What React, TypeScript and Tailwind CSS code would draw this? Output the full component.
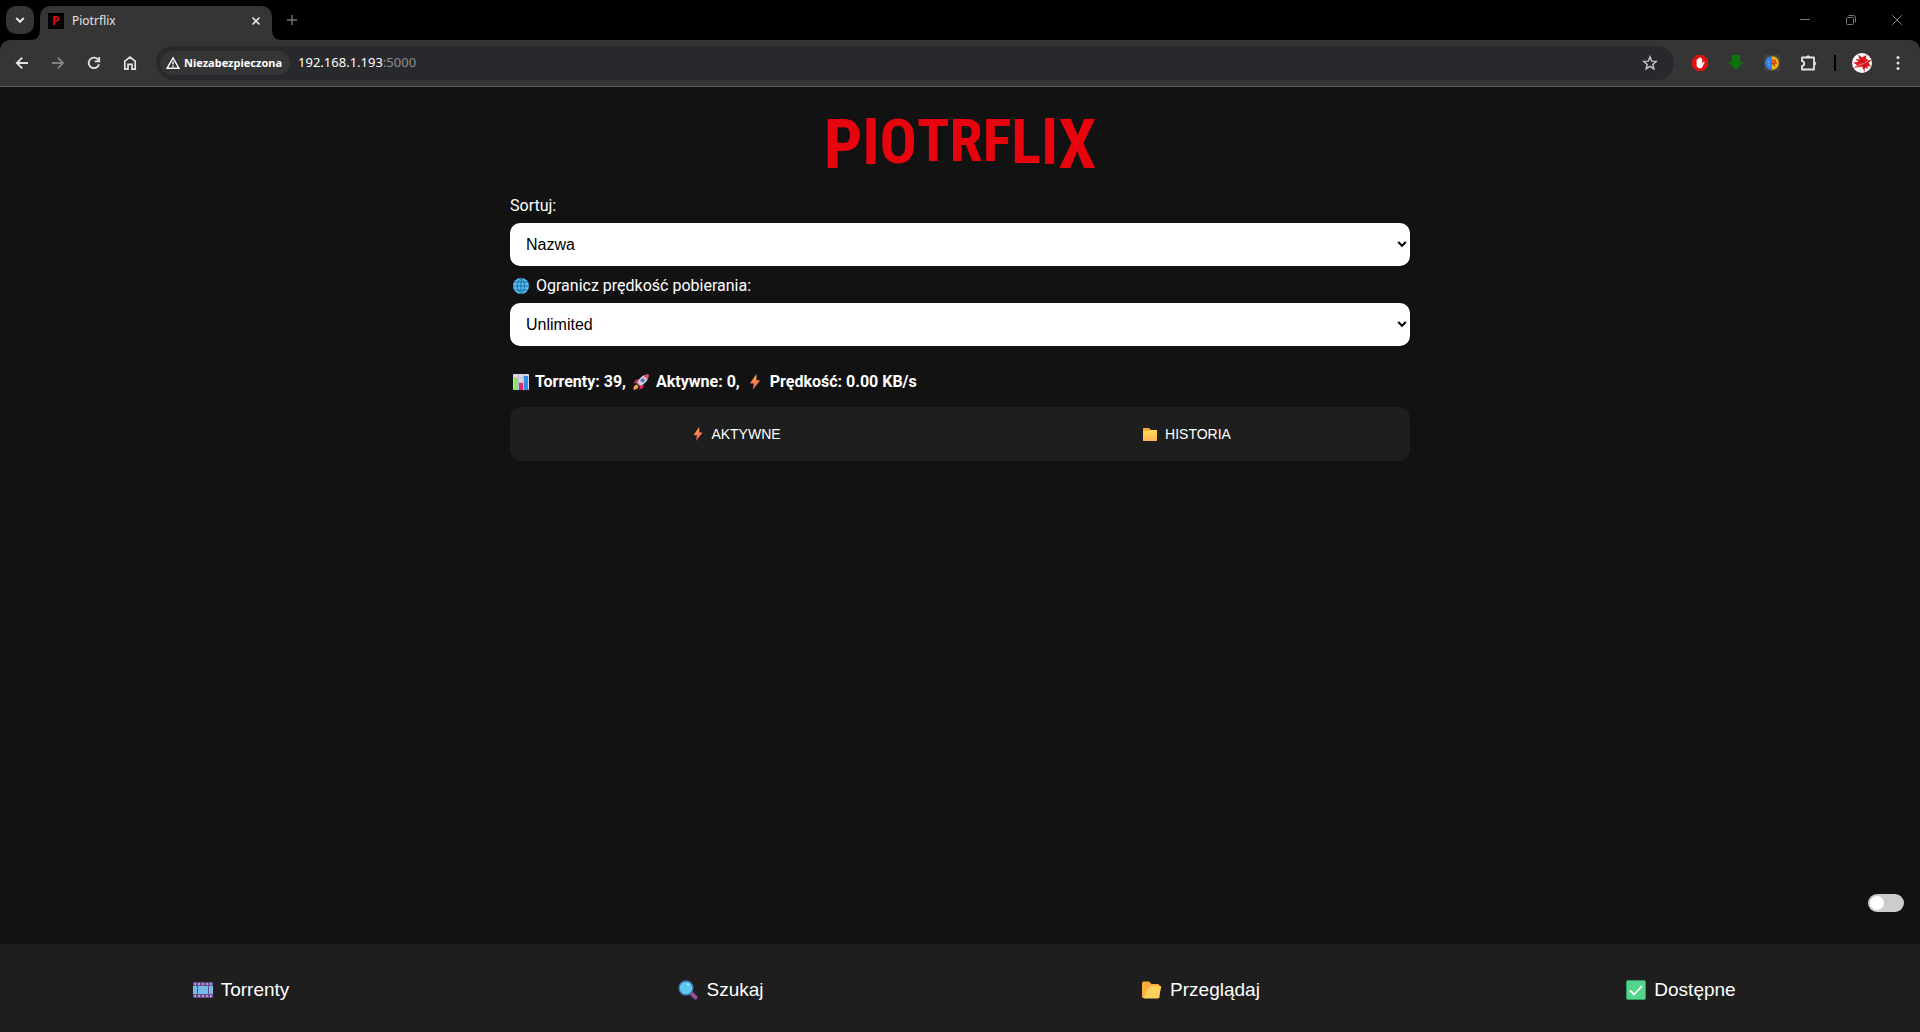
import React from "react";

type IconProps = { className?: string };

const ChevronIcon = ({ className }: IconProps) => (
  <svg viewBox="0 0 10 10" className={className} fill="none" stroke="currentColor" strokeWidth="2">
    <path d="M1.2 3l3.8 3.8L8.8 3" />
  </svg>
);

const BackIcon = ({ className }: IconProps) => (
  <svg viewBox="0 0 16 16" className={className} fill="none" stroke="currentColor" strokeWidth="1.8">
    <path d="M14 8H3M8.2 2.6L2.8 8l5.4 5.4" />
  </svg>
);

const ForwardIcon = ({ className }: IconProps) => (
  <svg viewBox="0 0 16 16" className={className} fill="none" stroke="currentColor" strokeWidth="1.8">
    <path d="M2 8h11M7.8 2.6L13.2 8l-5.4 5.4" />
  </svg>
);

const ReloadIcon = ({ className }: IconProps) => (
  <svg viewBox="0 0 16 16" className={className} fill="none" stroke="currentColor" strokeWidth="1.8">
    <path d="M13 9.2A5.2 5.2 0 1 1 11.8 4.4L13 5.6" />
    <path d="M13.2 2v4.4H8.8" />
  </svg>
);

const HomeIcon = ({ className }: IconProps) => (
  <svg viewBox="0 0 16 16" className={className} fill="none" stroke="currentColor" strokeWidth="1.7">
    <path d="M2.8 6.2L8 2l5.2 4.2v8H10V9.3H6v4.900H2.800z" />
  </svg>
);

const WarningIcon = ({ className }: IconProps) => (
  <svg viewBox="0 0 14 14" className={className} fill="none" stroke="currentColor" strokeWidth="1.4">
    <path d="M7 1.8L13 12.3H1z" />
    <path d="M7 5.4v3.2M7 9.6v1.3" />
  </svg>
);

const StarIcon = ({ className }: IconProps) => (
  <svg viewBox="0 0 16 16" className={className} fill="none" stroke="currentColor" strokeWidth="1.4">
    <path d="M8 1.8l1.7 4.3 4.6.3-3.5 3 1.1 4.5L8 11.4l-3.9 2.5 1.1-4.5-3.5-3 4.6-.3z" />
  </svg>
);

const BlockerIcon = ({ className }: IconProps) => (
  <svg viewBox="0 0 16 16" className={className}>
    <path d="M4.7 0h6.6L16 4.7v6.6L11.3 16H4.7L0 11.3V4.7z" fill="#e01010" />
    <path d="M4.600 8V5a.7.7 0 0 1 1.400 0V3.700a.7.7 0 0 1 1.400 0V3a.7.7 0 0 1 1.400 0v.9a.7.7 0 0 1 1.400 0v4.600l1.200-1.500c.6-.6 1.500 0 1.100.7l-2.100 4c-.6 1-1.300 1.500-2.600 1.500-2 0-3.200-1.200-3.200-3.200z" fill="#fff" />
  </svg>
);

const DownloadIcon = ({ className }: IconProps) => (
  <svg viewBox="0 0 16 16" className={className}>
    <path d="M4 0h8v7h4l-8 8-8-8h4z" fill="#0a750a" />
  </svg>
);

const GlobeToolIcon = ({ className }: IconProps) => (
  <svg viewBox="0 0 16 16" className={className}>
    <rect width="16" height="16" fill="#45413f" />
    <path d="M8 1a7 7 0 0 0 0 14z" fill="#2f80e8" />
    <path d="M8 1a7 7 0 0 1 0 14z" fill="#f0b51c" />
    <path d="M3.500 5l2 1.500-1.500 2 2 3" stroke="#62a8f5" fill="none" />
    <path d="M8 5.500h3l1 2.500H8l3 3" stroke="#d8351c" strokeWidth="1.300" fill="none" />
    <path d="M8 1a7 7 0 0 1 0 14" stroke="#8a6a25" strokeWidth=".8" fill="none" />
  </svg>
);

const PuzzleIcon = ({ className }: IconProps) => (
  <svg viewBox="0 0 18 18" className={className} fill="none" stroke="currentColor" strokeWidth="1.8">
    <path d="M2 3.500h12v12H2v-3.700c3 0 3-4.600 0-4.600z" strokeLinejoin="round" />
    <path d="M6.500 3a1.800 1.800 0 0 1 3.400 0zM14.500 7.800a1.800 1.800 0 0 1 0 3.400z" fill="currentColor" strokeWidth="1" />
  </svg>
);

const MapleIcon = ({ className }: IconProps) => (
  <svg viewBox="0 0 20 20" className={className}>
    <circle cx="10" cy="10" r="10" fill="#fff" />
    <path d="M6 1.500l4 3 4.500-2.500-.5 4 5.500 1.500-3 2 2.500 4-3.500-.5.500 3-3-1.500-.5 4.500-2.500-5.500L6.500 14 1.500 15.500 5 12 1 9.500l5.500-.5L3.500 6l4 .5z" fill="#e0161c" />
    <path d="M3 14.500l5-3 4-1 6-4" stroke="#fff" strokeWidth=".5" fill="none" />
    <path d="M12 10l1 5M11 10L8 4" stroke="#8f171b" strokeWidth=".6" fill="none" />
  </svg>
);

const DotsIcon = ({ className }: IconProps) => (
  <svg viewBox="0 0 16 16" className={className} fill="currentColor">
    <circle cx="8" cy="2.500" r="1.500" /><circle cx="8" cy="8" r="1.500" /><circle cx="8" cy="13.500" r="1.500" />
  </svg>
);

const GlobeIcon = ({ className }: IconProps) => (
  <svg viewBox="0 0 16 16" className={className}>
    <circle cx="8" cy="8" r="8" fill="#55bdf5" />
    <path d="M8 0v16M0 8h16M1.500 4h13M1.500 12h13M8 .4c-5 4-5 11.200 0 15.200M8 .4c5 4 5 11.200 0 15.200" stroke="#17618f" strokeWidth=".8" fill="none" />
  </svg>
);

const ChartIcon = ({ className }: IconProps) => (
  <svg viewBox="0 0 16 16" className={className}>
    <rect width="16" height="16" rx="1" fill="#dcd5e6" />
    <path d="M0 4h16M0 8h16M5.500 0v16M10.500 0v16" stroke="#b9b0c8" strokeWidth=".6" />
    <rect x="1" y="4" width="4" height="12" fill="#8be06a" />
    <rect x="6" y="9" width="4" height="7" fill="#e3246f" />
    <rect x="11" y="2" width="4" height="14" fill="#2f8fdf" />
  </svg>
);

const RocketIcon = ({ className }: IconProps) => (
  <svg viewBox="0 0 16 16" className={className}>
    <path d="M6 5L2.500 6 .5 9.500l4-.5zM11 10l-1 4-3.500 1.700.5-4z" fill="#d8275f" />
    <path d="M3.500 10.500C1 11 .5 13 .3 15.700 3 15.500 5 15 5.500 12.500z" fill="#ff9a3d" />
    <path d="M15.500.5C10 .5 6.500 3.500 4 9l3 3C12.500 9.500 15.500 6 15.500.5z" fill="#d6cfe4" />
    <path d="M15.500.5c-2 0-3.700.4-5 1.200l3.800 3.800c.8-1.300 1.200-3 1.200-5z" fill="#f0436d" />
    <circle cx="9.700" cy="6.300" r="1.900" fill="#3386c5" stroke="#8374a1" strokeWidth=".7" />
    <path d="M4 9l3 3" stroke="#816d9d" strokeWidth="1.400" />
  </svg>
);

const BoltIcon = ({ className }: IconProps) => (
  <svg viewBox="0 0 10 16" className={className}>
    <defs>
      <linearGradient id="bolt" x1="0" y1="0" x2="0" y2="1">
        <stop offset="0" stopColor="#ffb250" /><stop offset="1" stopColor="#ef4e4b" />
      </linearGradient>
    </defs>
    <path d="M6.500 0L.3 8.700c-.3.400-.1.700.4.700h3L2.800 16l6.800-9c.3-.400.1-.800-.4-.800H6.400z" fill="url(#bolt)" />
  </svg>
);

const FolderIcon = ({ className }: IconProps) => (
  <svg viewBox="0 0 14 14" className={className}>
    <defs>
      <linearGradient id="folder" x1="0" y1="0" x2="0" y2="1">
        <stop offset="0" stopColor="#ffdc55" /><stop offset="1" stopColor="#ffb657" />
      </linearGradient>
    </defs>
    <path d="M0 1.500Q0 1 .5 1H6l2 2h5.500q.5 0 .5.500V6H0z" fill="#f3a93b" />
    <path d="M0 4h6l2-1h5.500q.5 0 .5.500v10q0 .500-.5.500H.5q-.5 0-.5-.500z" fill="url(#folder)" />
  </svg>
);

const OpenFolderIcon = ({ className }: IconProps) => (
  <svg viewBox="0 0 20 18" className={className}>
    <path d="M0 2Q0 .5 1.500.5H7L9.500 3H16q1.500 0 1.500 1.500V17H1.500Q0 17 0 15.500z" fill="#fbae3c" />
    <path d="M9 5h9.500q.8 0 .7 1L17 16q-.3 1.500-1.500 1.500h-13q-1 0-.7-1.200L5 8Q5.300 7 6.300 7H7z" fill="#ffd05a" />
  </svg>
);

const FilmIcon = ({ className }: IconProps) => (
  <svg viewBox="0 0 20 16" className={className}>
    <rect width="20" height="16" fill="#674b91" />
    <path d="M0 4h4v8H0zM5 4h10v8H5zM16 4h4v8h-4z" fill="#75b9e6" />
    <path d="M1.500 2H20M1.500 14H20" stroke="#e5dcf2" strokeWidth="1.500" strokeDasharray="1.500 2.400" />
  </svg>
);

const SearchIcon = ({ className }: IconProps) => (
  <svg viewBox="0 0 20 20" className={className}>
    <path d="M12 12l5.500 5.500" stroke="#8f5096" strokeWidth="4" strokeLinecap="round" />
    <circle cx="8" cy="8" r="7" fill="#5acbef" stroke="#3e6caa" strokeWidth="1.300" />
    <circle cx="10" cy="4.500" r="1" fill="#c8f5ff" />
  </svg>
);

const CheckIcon = ({ className }: IconProps) => (
  <svg viewBox="0 0 20 20" className={className}>
    <rect x=".5" y=".5" width="19" height="19" rx="1.500" fill="#52d68c" stroke="#329a65" />
    <path d="M4 10.500l4 4L16 6" fill="none" stroke="#fff" strokeWidth="1.800" />
  </svg>
);

function TabStrip() {
  return (
    <div className="flex h-10 items-start bg-black text-[#e3e3e3]">
      <button aria-label="Szukaj kart" className="ml-1.5 mt-1.5 flex h-7 w-7 items-center justify-center rounded-[10px] bg-[#353535]">
        <ChevronIcon className="h-2.5 w-2.5" />
      </button>
      <div className="relative ml-1.5 mt-1.5 flex h-[34px] w-58 items-center rounded-t-[10px] bg-[#353535] pb-1 pl-2 pr-2.5">
        <svg viewBox="0 0 10 10" className="absolute -left-2.5 bottom-0 h-2.5 w-2.5"><path d="M10 0v10H0Q10 10 10 0z" fill="#353535" /></svg>
        <svg viewBox="0 0 10 10" className="absolute -right-2.5 bottom-0 h-2.5 w-2.5"><path d="M0 0v10h10Q0 10 0 0z" fill="#353535" /></svg>
        <span className="flex h-4 w-4 items-center justify-center bg-black font-['Roboto_Condensed','Roboto',sans-serif] text-[13px] font-bold text-[#e50914]">P</span>
        <span className="ml-2 flex-1 font-['Noto_Sans',sans-serif] text-xs">Piotrflix</span>
        <button aria-label="Zamknij kartę" className="flex h-3 w-3 items-center justify-center">
          <svg viewBox="0 0 10 10" className="h-2.5 w-2.5" stroke="currentColor" strokeWidth="1.600"><path d="M1.500 1.500l7 7M8.500 1.500l-7 7" /></svg>
        </button>
      </div>
      <button aria-label="Nowa karta" className="ml-3.5 mt-3.5 flex h-3 w-3 items-center justify-center text-[#777]">
        <svg viewBox="0 0 10 10" className="h-2.5 w-2.5" stroke="currentColor" strokeWidth="1.400"><path d="M5 0v10M0 5h10" /></svg>
      </button>
      <div className="ml-auto mr-[18px] flex h-10 items-center gap-9 text-[#777]">
        <button aria-label="Minimalizuj"><svg viewBox="0 0 10 10" className="h-2.5 w-2.5" stroke="currentColor"><path d="M0 4.500h10" /></svg></button>
        <button aria-label="Przywróć">
          <svg viewBox="0 0 10 10" className="h-2.5 w-2.5" fill="none" stroke="currentColor"><rect x=".5" y="2.500" width="7" height="7" rx="1" /><path d="M2.500.5h5a2 2 0 0 1 2 2v5" /></svg>
        </button>
        <button aria-label="Zamknij"><svg viewBox="0 0 10 10" className="h-2.5 w-2.5" stroke="currentColor"><path d="M0 0l10 10M10 0L0 10" /></svg></button>
      </div>
    </div>
  );
}

function Toolbar() {
  return (
    <div className="bg-black">
      <div className="flex h-[47px] items-center rounded-t-[10px] border-b border-[#5c5c5c] bg-[#353535] px-3.5 text-[#e3e3e3]">
        <nav aria-label="Nawigacja przeglądarki" className="flex items-center gap-5">
          <button aria-label="Wstecz"><BackIcon className="h-4 w-4" /></button>
          <button aria-label="Dalej" className="text-[#838383]"><ForwardIcon className="h-4 w-4" /></button>
          <button aria-label="Odśwież"><ReloadIcon className="h-4 w-4" /></button>
          <button aria-label="Strona główna"><HomeIcon className="h-4 w-4" /></button>
        </nav>
        <div className="ml-[18px] flex h-[34px] flex-1 items-center rounded-full bg-[#28292d] pl-1 pr-4 font-['Noto_Sans',sans-serif]">
          <button className="flex h-6 items-center gap-1 rounded-full bg-[#353535] pl-1.5 pr-2 text-[11px] font-bold text-white">
            <WarningIcon className="h-3.5 w-3.5" />
            Niezabezpieczona
          </button>
          <span className="ml-2 text-[13px] text-white">192.168.1.193<span className="text-[#8e8e8e]">:5000</span></span>
          <button aria-label="Dodaj do zakładek" className="ml-auto text-[#c7c7c7]"><StarIcon className="h-4 w-4" /></button>
        </div>
        <div className="ml-[18px] flex items-center gap-5">
          <button aria-label="Blokada reklam"><BlockerIcon className="h-4 w-4" /></button>
          <button aria-label="Pobieranie"><DownloadIcon className="h-4 w-4" /></button>
          <button aria-label="Tłumacz"><GlobeToolIcon className="h-4 w-4" /></button>
          <button aria-label="Rozszerzenia"><PuzzleIcon className="h-[18px] w-[18px]" /></button>
        </div>
        <span className="ml-4 h-4 w-0.5 bg-black" />
        <button aria-label="Profil" className="ml-4"><MapleIcon className="h-5 w-5" /></button>
        <button aria-label="Menu" className="ml-[18px]"><DotsIcon className="h-4 w-4" /></button>
      </div>
    </div>
  );
}

function Logo() {
  return (
    <h1 aria-label="PIOTRFLIX" className="mt-6 flex h-[68px] items-start justify-center font-['Roboto_Condensed','Liberation_Sans_Narrow',sans-serif] font-bold text-[#e8040e]">
      <span className="text-[68px] leading-none">P</span>
      <span className="text-[64px] leading-none">I</span>
      <span className="text-[62px] leading-none">O</span>
      <span className="text-[60px] leading-none">TRF</span>
      <span className="text-[62px] leading-none">L</span>
      <span className="text-[64px] leading-none">I</span>
      <span className="text-[68px] leading-none">X</span>
    </h1>
  );
}

function Select({ id, options }: { id: string; options: string[] }) {
  return (
    <div className="relative mt-1.5">
      <select id={id} className="block h-[43px] w-full appearance-none rounded-[10px] bg-white px-4 font-['Liberation_Sans',sans-serif] text-base text-black">
        {options.map((option) => <option key={option}>{option}</option>)}
      </select>
      <ChevronIcon className="pointer-events-none absolute right-[3px] top-4 h-2.5 w-2.5 text-black" />
    </div>
  );
}

const navItems = [
  { label: "Torrenty", icon: <FilmIcon className="h-4 w-5" /> },
  { label: "Szukaj", icon: <SearchIcon className="h-5 w-5" /> },
  { label: "Przeglądaj", icon: <OpenFolderIcon className="h-[18px] w-5" /> },
  { label: "Dostępne", icon: <CheckIcon className="h-5 w-5" /> },
];

export default function App() {
  return (
    <div className="flex min-h-screen flex-col bg-[#121212] text-white">
      <header>
        <TabStrip />
        <Toolbar />
      </header>
      <main className="mx-auto w-full max-w-[900px] flex-1 font-['Roboto',sans-serif] text-base">
        <Logo />
        <label htmlFor="sort" className="mt-4 block leading-[22px]">Sortuj:</label>
        <Select id="sort" options={["Nazwa", "Data", "Rozmiar"]} />
        <label htmlFor="limit" className="mt-[9px] flex items-center gap-[7px] pl-[3px] leading-[22px]">
          <GlobeIcon className="h-4 w-4" />
          Ogranicz prędkość pobierania:
        </label>
        <Select id="limit" options={["Unlimited", "1 MB/s", "5 MB/s"]} />
        <p className="mt-[25px] flex items-center pl-[3px] leading-[22px] font-bold">
          <ChartIcon className="mr-1.5 h-4 w-4" />Torrenty: 39,
          <RocketIcon className="mx-[7px] h-4 w-4" />Aktywne: 0,
          <BoltIcon className="mx-2.5 h-4 w-2.5" />Prędkość: 0.00 KB/s
        </p>
        <div className="mt-3.5 grid h-[54px] grid-cols-2 rounded-xl bg-[#1e1e1e] font-['Liberation_Sans',sans-serif] text-sm">
          <button className="flex items-center justify-center gap-2 pl-1"><BoltIcon className="h-3.5 w-2.5" />AKTYWNE</button>
          <button className="flex items-center justify-center gap-2 pl-1"><FolderIcon className="h-3.5 w-3.5" />HISTORIA</button>
        </div>
      </main>
      <label className="mb-8 mr-4 flex cursor-pointer self-end">
        <input type="checkbox" aria-label="Przełącz motyw" className="peer sr-only" />
        <span className="flex h-[18px] w-9 items-center rounded-full bg-[#ccc] px-0.5 peer-checked:justify-end">
          <span className="h-3.5 w-3.5 rounded-full bg-white" />
        </span>
      </label>
      <nav aria-label="Główna nawigacja" className="grid h-22 grid-cols-4 bg-[#1e1e1e] font-['Liberation_Sans',sans-serif] text-[19px]">
        {navItems.map(({ label, icon }) => (
          <button key={label} className="flex items-center justify-center gap-2 pl-0.5 pt-1">{icon}{label}</button>
        ))}
      </nav>
    </div>
  );
}
